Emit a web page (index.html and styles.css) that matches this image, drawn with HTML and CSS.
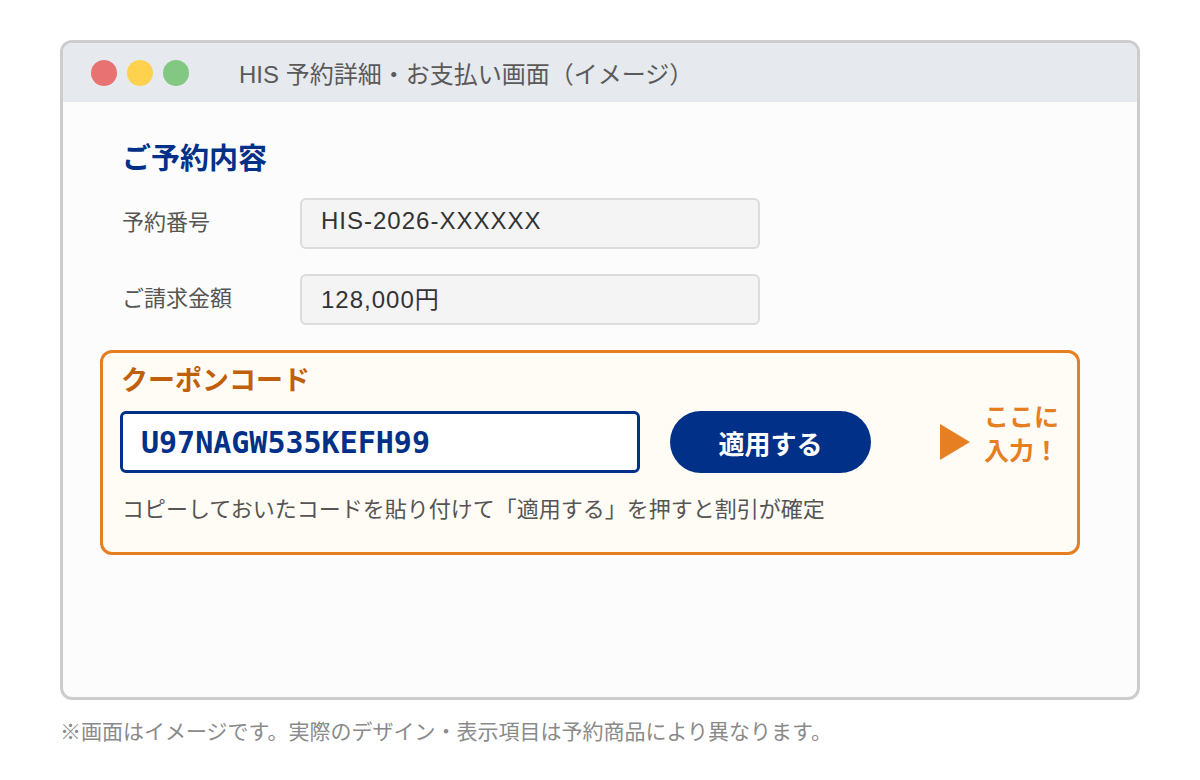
FILE: index.html
```html
<!DOCTYPE html>
<html lang="ja">

<head>
    <meta charset="utf-8">
    <title>HIS 予約詳細・お支払い画面（イメージ）</title>
    <link rel="stylesheet" href="styles.css">
</head>

<body>
    <div class="page">
        <div class="window">
            <div class="titlebar">
                <span class="dot dot-red"></span>
                <span class="dot dot-yellow"></span>
                <span class="dot dot-green"></span>
                <span class="win-title">HIS 予約詳細・お支払い画面（イメージ）</span>
            </div>

            <div class="content">
                <div class="summary">
                    <h2 class="heading">ご予約内容</h2>
                    <div class="row">
                        <span class="label">予約番号</span>
                        <div class="field">HIS-2026-XXXXXX</div>
                    </div>
                    <div class="row">
                        <span class="label">ご請求金額</span>
                        <div class="field">128,000円</div>
                    </div>
                </div>

                <!-- coupon entry -->
                <div class="coupon">
                    <div class="coupon-title">クーポンコード</div>
                    <div class="coupon-row">
                        <div class="code-input">U97NAGW535KEFH99</div>
                        <div class="apply-btn">適用する</div>
                        <span class="arrow"></span>
                        <div class="hint-here">ここに<br>入力！</div>
                    </div>
                    <p class="coupon-note">コピーしておいたコードを貼り付けて「適用する」を押すと割引が確定</p>
                </div>
            </div>
        </div>

        <p class="footnote">※画面はイメージです。実際のデザイン・表示項目は予約商品により異なります。</p>
    </div>
</body>

</html>
```

FILE: styles.css
```css
body {
    margin: 0;
    background-color: #ffffff;
    font-family: "Noto Sans CJK JP", "Noto Sans", sans-serif;
    color: #333333;
}

.page {
    padding: 40px 60px 0;
}

/* WINDOW FRAME */

.window {
    box-sizing: border-box;
    width: 1080px;
    height: 660px;
    border: 3px solid #cdcdcd;
    border-radius: 12px;
    background-color: #fcfcfc;
    overflow: hidden;
}

.titlebar {
    display: flex;
    align-items: center;
    height: 59px;
    padding-left: 28px;
    background-color: #e6e9ee;
}

.dot {
    width: 26px;
    height: 26px;
    border-radius: 50%;
    margin-right: 10px;
}

.dot-red {
    background-color: #e87272;
}

.dot-yellow {
    background-color: #fed24f;
}

.dot-green {
    background-color: #82c882;
}

.win-title {
    margin-left: 40px;
    font-family: "Liberation Sans", "Noto Sans CJK JP", sans-serif;
    font-size: 24px;
    color: #5a5a5a;
}

/* RESERVATION SUMMARY */

.content {
    padding: 36px 57px 0 37px;
}

.summary {
    padding-left: 22px;
}

.heading {
    margin: 0;
    font-size: 29px;
    line-height: 36px;
    font-weight: bold;
    color: #003087;
}

.row {
    display: flex;
    align-items: center;
    margin-top: 24px;
}

.row + .row {
    margin-top: 25px;
}

.label {
    width: 178px;
    padding-bottom: 7px;
    font-size: 22px;
    color: #555555;
}

.field {
    box-sizing: border-box;
    display: flex;
    align-items: center;
    width: 460px;
    height: 51px;
    padding: 0 0 5px 19px;
    border: 2px solid #dcdcdc;
    border-radius: 6px;
    background-color: #f4f4f4;
    font-family: "Liberation Sans", "Noto Sans CJK JP", sans-serif;
    font-size: 24px;
    letter-spacing: 1px;
    color: #333333;
}

/* COUPON */

.coupon {
    box-sizing: border-box;
    height: 205px;
    margin-top: 25px;
    padding: 9px 17px 0;
    border: 3px solid #e67e22;
    border-radius: 12px;
    background-color: #fffcf6;
}

.coupon-title {
    padding-left: 1px;
    font-size: 27px;
    line-height: 34px;
    font-weight: bold;
    color: #c0600a;
}

.coupon-row {
    display: flex;
    align-items: center;
    margin-top: 15px;
}

.code-input {
    box-sizing: border-box;
    display: flex;
    align-items: center;
    width: 520px;
    height: 62px;
    padding-left: 18px;
    border: 3px solid #003087;
    border-radius: 6px;
    background-color: #ffffff;
    font-family: "DejaVu Sans Mono", monospace;
    font-size: 30px;
    font-weight: bold;
    color: #003087;
}

.apply-btn {
    display: flex;
    align-items: center;
    justify-content: center;
    width: 201px;
    height: 62px;
    margin-left: 30px;
    border-radius: 31px;
    background-color: #003087;
    font-size: 26px;
    font-weight: bold;
    color: #ffffff;
}

.arrow {
    width: 0;
    height: 0;
    margin-left: 69px;
    border-left: 30px solid #e67e22;
    border-top: 18px solid transparent;
    border-bottom: 18px solid transparent;
}

/* text block sits a little above the arrow */
.hint-here {
    margin-top: -20px;
    margin-left: 14px;
    font-size: 25px;
    line-height: 34px;
    font-weight: bold;
    color: #e67e22;
}

.coupon-note {
    margin: 18px 0 0 2px;
    font-size: 22px;
    line-height: 32px;
    color: #555555;
}

.footnote {
    margin: 15px 0 0;
    font-size: 21px;
    line-height: 30px;
    color: #8a8a8a;
}
```
